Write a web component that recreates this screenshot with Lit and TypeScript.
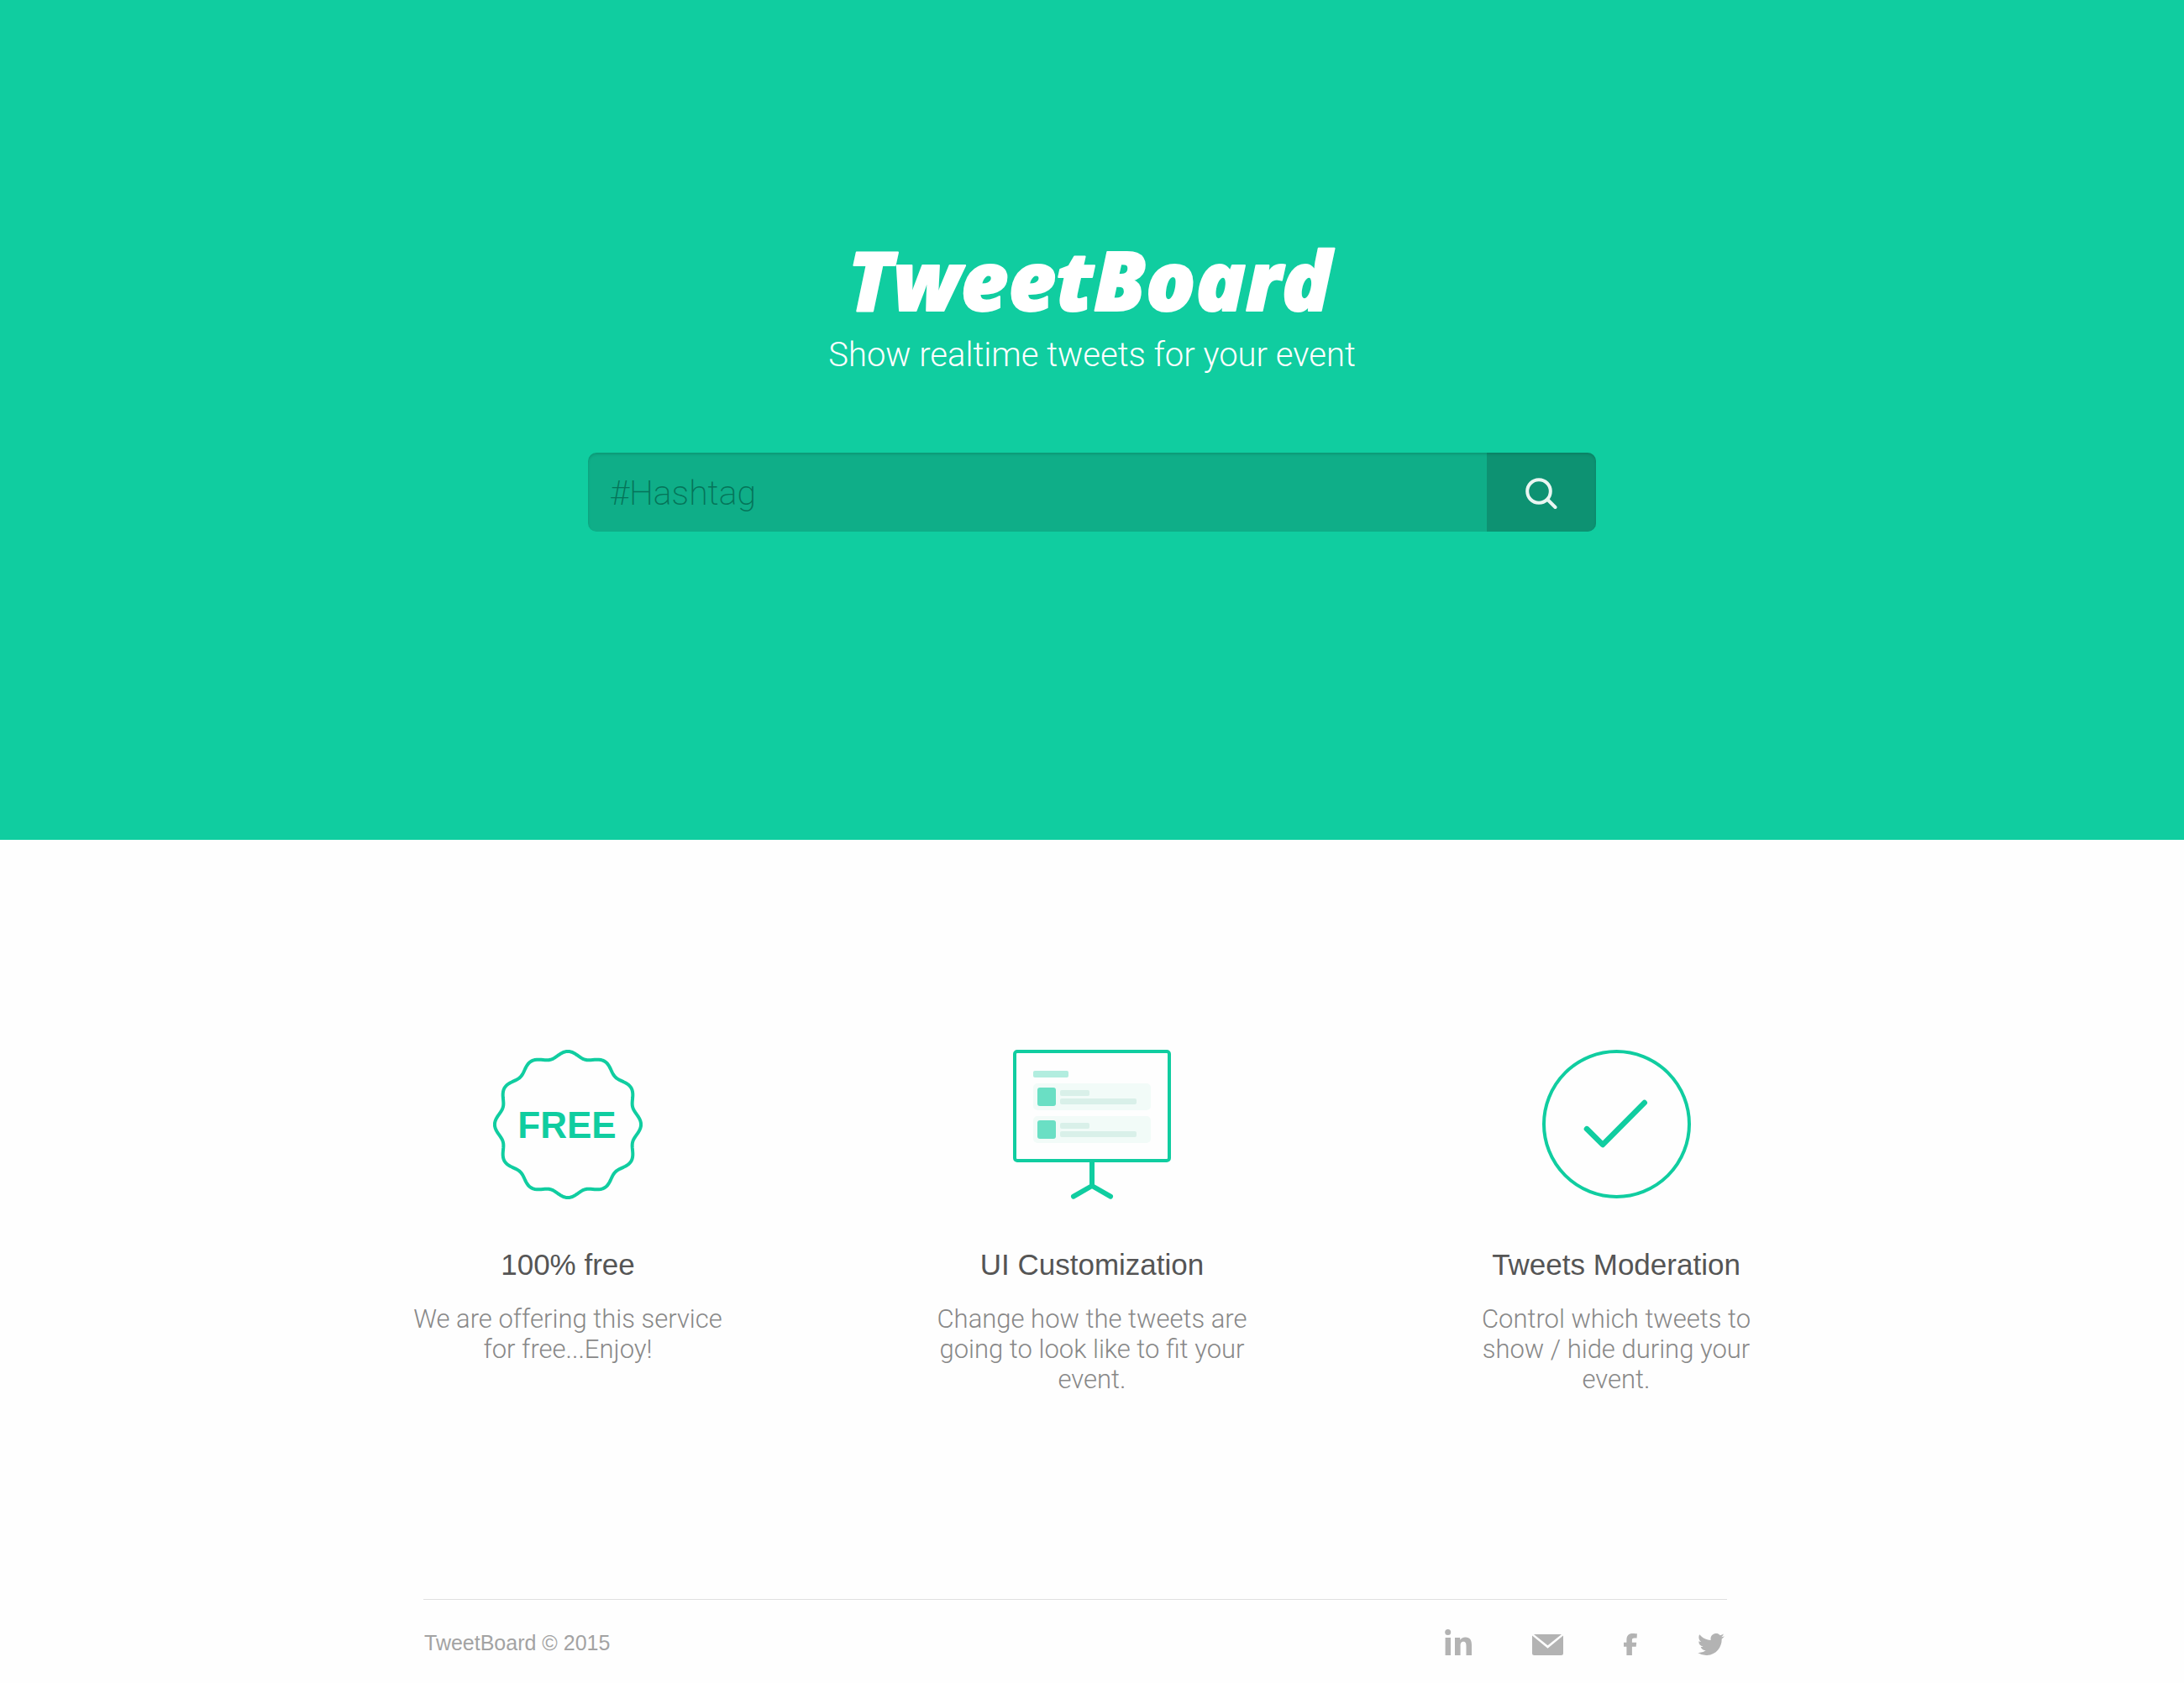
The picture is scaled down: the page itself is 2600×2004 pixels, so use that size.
import { LitElement, html, css, svg } from "lit";
import { customElement } from "lit/decorators.js";

// Closed outline of a badge whose rim waves in and out around a circle.
function wavyRim(center: number, radius: number, depth: number, lobes: number): string {
  const steps = lobes * 20;
  const points: string[] = [];
  for (let i = 0; i < steps; i++) {
    const a = (i / steps) * Math.PI * 2;
    const r = radius + depth * Math.cos(lobes * a);
    points.push(`${(center + r * Math.sin(a)).toFixed(2)} ${(center - r * Math.cos(a)).toFixed(2)}`);
  }
  return `M${points.join("L")}Z`;
}

const tweetCard = (y: number) => svg`
  <rect x="24" y=${y} width="140" height="32" rx="5" fill="#f2fbf8" />
  <rect x="29" y=${y + 5} width="22" height="22" rx="3" fill="#6adfc4" />
  <rect x="56" y=${y + 8} width="35" height="7" rx="2" fill="#d9f0e9" />
  <rect x="56" y=${y + 18} width="91" height="7" rx="2" fill="#d9f0e9" />`;

const badgeIcon = html`<svg width="178" height="178" viewBox="0 0 178 178" role="img" aria-label="Free">
  <path d=${wavyRim(89, 83.5, 3.6, 12)} fill="none" stroke="#10cda0" stroke-width="4" stroke-linejoin="round" />
  <text class="badge-text" x="88" y="105" text-anchor="middle">FREE</text>
</svg>`;

const boardIcon = html`<svg width="188" height="178" viewBox="0 0 188 178" aria-hidden="true">
  <rect x="2" y="2" width="184" height="130" rx="3" fill="none" stroke="#10cda0" stroke-width="4" />
  <rect x="24" y="25" width="42" height="8" rx="2" fill="#b2eddf" />
  ${tweetCard(40)} ${tweetCard(79)}
  <path d="M94 133V162M72 174.7L94 162L116 174.7" fill="none" stroke="#10cda0" stroke-width="6" stroke-linecap="round" stroke-linejoin="round" />
</svg>`;

const checkIcon = html`<svg width="177" height="178" viewBox="0 0 177 178" aria-hidden="true">
  <circle cx="88.5" cy="88.5" r="86.5" fill="none" stroke="#10cda0" stroke-width="4" />
  <path d="M53 94.2L72 113L121.7 63" fill="none" stroke="#10cda0" stroke-width="6.6" stroke-linecap="round" stroke-linejoin="round" />
</svg>`;

const features = [
  { icon: badgeIcon, title: "100% free", text: "We are offering this service for free...Enjoy!" },
  { icon: boardIcon, title: "UI Customization", text: "Change how the tweets are going to look like to fit your event." },
  { icon: checkIcon, title: "Tweets Moderation", text: "Control which tweets to show / hide during your event." },
];

const links = [
  {
    name: "LinkedIn",
    icon: html`<svg width="32" height="31" viewBox="0 0 32 31" aria-hidden="true"><circle cx="3.7" cy="3.5" r="3.5" /><path d="M.6 10H7V31H.6ZM12 10H18.2V12.7C19.5 10.700 21.500 9.400 24.400 9.400C30.300 9.400 32 13.200 32 18.600V31H25.500V20C25.500 17 25 14.700 22.200 14.700C19.300 14.700 18.600 16.900 18.600 19.800V31H12Z" /></svg>`,
  },
  {
    name: "Email",
    icon: html`<svg width="37" height="25" viewBox="0 0 37 25" aria-hidden="true"><path d="M2 0H35L18.500 13.200ZM0 1.400L18.500 16.700L37 1.400V22.500Q37 25 34.500 25H2.500Q0 25 0 22.500Z" /></svg>`,
  },
  {
    name: "Facebook",
    icon: html`<svg width="16" height="26" viewBox="0 0 16 26" aria-hidden="true"><path d="M3.400 26V15.700H0V10.700H3.400V7.500C3.400 2.500 6 0 10.600 0C12.800 0 15.900.3 15.900.3L15.600 5.500H12.700C10.700 5.500 9.900 6.300 9.900 8V10.700H15.200L14.700 15.700H9.900V26Z" /></svg>`,
  },
  {
    name: "Twitter",
    icon: html`<svg width="32" height="26" viewBox="0 2.200 24 19.600" aria-hidden="true"><path d="M23.953 4.570a10 10 0 01-2.825.775 4.958 4.958 0 002.163-2.723c-.951.555-2.005.959-3.127 1.184a4.920 4.920 0 00-8.384 4.482C7.690 8.095 4.067 6.130 1.640 3.162a4.822 4.822 0 00-.666 2.475c0 1.710.870 3.213 2.188 4.096a4.904 4.904 0 01-2.228-.616v.060a4.923 4.923 0 003.946 4.827 4.996 4.996 0 01-2.212.085 4.936 4.936 0 004.604 3.417 9.867 9.867 0 01-6.102 2.105c-.390 0-.779-.023-1.170-.067a13.995 13.995 0 007.557 2.209c9.053 0 13.998-7.496 13.998-13.985 0-.210 0-.420-.015-.630A9.935 9.935 0 0024 4.590z" /></svg>`,
  },
];

@customElement("app-root")
export class AppRoot extends LitElement {
  static styles = css`
    :host {
      display: block;
      min-height: 100vh;
      background: #fefefe;
      font-family: "Liberation Sans", Arial, sans-serif;
    }
    * {
      box-sizing: border-box;
    }
    h1,
    h2,
    p {
      margin: 0;
    }
    .hero {
      display: flex;
      flex-direction: column;
      align-items: center;
      min-height: 1000px;
      padding: 255px 40px 40px;
      background: #10cda0;
      color: #fff;
      text-align: center;
    }
    .logo svg {
      display: block;
    }
    .logo-text {
      font: italic 800 98px "Open Sans", "Noto Sans", sans-serif;
      fill: #fff;
      stroke: #fff;
      stroke-width: 2px;
      stroke-linejoin: round;
    }
    .tagline {
      font: 300 40px/48px Roboto, sans-serif;
    }
    .search {
      position: relative;
      display: flex;
      width: 100%;
      max-width: 1200px;
      height: 94px;
      margin-top: 92px;
      border-radius: 10px;
      overflow: hidden;
      background: #0fae88;
    }
    .search::after {
      content: "";
      position: absolute;
      inset: 0;
      border-radius: 10px;
      box-shadow: inset 0 2px 3px rgba(0, 60, 45, 0.2);
      pointer-events: none;
    }
    .field {
      flex: 1;
      min-width: 0;
      padding: 2px 26px 0;
      border: 0;
      outline: 0;
      background: none;
      color: #fff;
      font: 200 41px/48px Roboto, sans-serif;
    }
    .field::placeholder {
      color: #057459;
      opacity: 1;
    }
    .submit {
      display: flex;
      align-items: center;
      justify-content: center;
      width: 130px;
      padding: 4px 0 0;
      border: 0;
      background: #0d9272;
      cursor: pointer;
    }
    .features {
      display: grid;
      grid-template-columns: repeat(3, 1fr);
      max-width: 1872px;
      margin: 0 auto;
      padding: 250px 0 0;
    }
    .feature {
      display: flex;
      flex-direction: column;
      align-items: center;
      text-align: center;
    }
    .badge-text {
      font: 700 44px "Liberation Sans", Arial, sans-serif;
      fill: #10cda0;
    }
    .title {
      margin-top: 58px;
      color: #555;
      font-size: 35px;
      font-weight: 400;
      line-height: 40px;
    }
    .text {
      max-width: 380px;
      margin-top: 27px;
      color: #888;
      font: 300 31px/36px Roboto, sans-serif;
    }
    .bottom {
      max-width: 1592px;
      margin: 243px auto 0;
      padding-right: 40px;
    }
    .footer {
      display: flex;
      align-items: flex-end;
      justify-content: space-between;
      padding: 35px 3px 30px 1px;
      border-top: 1px solid #e0e0e0;
    }
    .copyright {
      color: #a3a3a3;
      font-size: 25px;
      line-height: 30px;
    }
    .links {
      display: flex;
      align-items: flex-end;
      gap: 72px;
    }
    .link {
      display: block;
      fill: #b3b3b3;
    }
    .link svg {
      display: block;
    }
  `;

  render() {
    return html`
      <header class="hero">
        <h1 class="logo">
          <svg width="640" height="144" viewBox="0 0 640 144">
            <text class="logo-text" x="317" y="115" text-anchor="middle">TweetBoard</text>
          </svg>
        </h1>
        <p class="tagline">Show realtime tweets for your event</p>
        <form class="search" role="search" @submit=${(e: Event) => e.preventDefault()}>
          <input class="field" type="text" placeholder="#Hashtag" aria-label="Hashtag" />
          <button class="submit" type="submit" aria-label="Search">
            <svg width="38" height="38" viewBox="0 0 38 38" fill="none" stroke="#e9f6f2" stroke-width="4" stroke-linecap="round" aria-hidden="true">
              <circle cx="16" cy="16" r="13.800" />
              <path d="M27 26.500L35.500 35" />
            </svg>
          </button>
        </form>
      </header>
      <main class="features">
        ${features.map(
          (f) => html`<section class="feature">
            ${f.icon}
            <h2 class="title">${f.title}</h2>
            <p class="text">${f.text}</p>
          </section>`
        )}
      </main>
      <div class="bottom">
        <footer class="footer">
          <p class="copyright">TweetBoard © 2015</p>
          <nav class="links" aria-label="Contact">
            ${links.map((l) => html`<a class="link" href="#" aria-label=${l.name}>${l.icon}</a>`)}
          </nav>
        </footer>
      </div>
    `;
  }
}
